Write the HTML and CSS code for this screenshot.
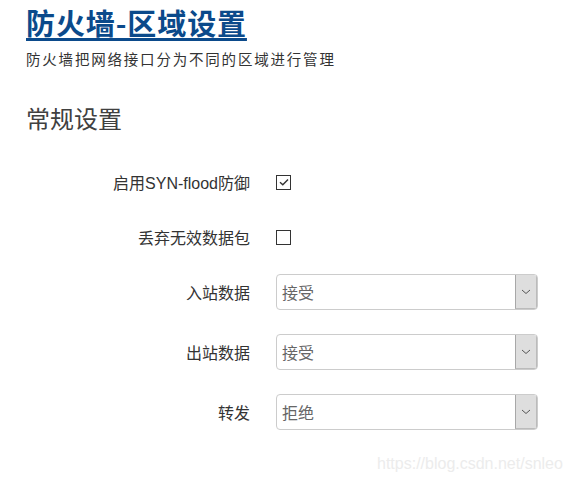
FILE: index.html
```html
<!DOCTYPE html>
<html lang="zh-CN">
<head>
<meta charset="utf-8">
<link rel="stylesheet" href="styles.css">
</head>
<body>
<div class="page">
  <h1 class="title"><a href="#">防火墙-区域设置</a></h1>
  <p class="desc">防火墙把网络接口分为不同的区域进行管理</p>
  <h2 class="section">常规设置</h2>
  <div class="form">
    <div class="row row-check">
      <div class="label">启用SYN-flood防御</div>
      <div class="field"><span class="checkbox"><svg viewBox="0 0 16 16" width="16" height="16"><path d="M4 8.2 L6.8 10.8 L12 5.4" fill="none" stroke="#333" stroke-width="1.4"/></svg></span></div>
    </div>
    <div class="row row-check">
      <div class="label">丢弃无效数据包</div>
      <div class="field"><span class="checkbox"></span></div>
    </div>
    <div class="row row-select">
      <div class="label">入站数据</div>
      <div class="field"><div class="select"><span class="value">接受</span><span class="arrow"><svg viewBox="0 0 10 6" width="10" height="6"><path d="M1 1 L5 4.5 L9 1" fill="none" stroke="#555" stroke-width="1"/></svg></span></div></div>
    </div>
    <div class="row row-select">
      <div class="label">出站数据</div>
      <div class="field"><div class="select"><span class="value">接受</span><span class="arrow"><svg viewBox="0 0 10 6" width="10" height="6"><path d="M1 1 L5 4.5 L9 1" fill="none" stroke="#555" stroke-width="1"/></svg></span></div></div>
    </div>
    <div class="row row-select">
      <div class="label">转发</div>
      <div class="field"><div class="select"><span class="value">拒绝</span><span class="arrow"><svg viewBox="0 0 10 6" width="10" height="6"><path d="M1 1 L5 4.5 L9 1" fill="none" stroke="#555" stroke-width="1"/></svg></span></div></div>
    </div>
  </div>
  <div class="watermark">https://blog.csdn.net/snleo</div>
</div>
</body>
</html>
```
FILE: styles.css
```css
html, body {
  margin: 0;
  padding: 0;
  background: #fff;
}
body {
  font-family: "Noto Sans CJK SC", "Liberation Sans", sans-serif;
  color: #333;
  width: 570px;
  height: 480px;
  overflow: hidden;
}
.page {
  padding-left: 26px;
  position: relative;
  height: 480px;
}
.title {
  margin: 0;
  padding-top: 4px;
  font-size: 29px;
  line-height: 36px;
  font-weight: bold;
  letter-spacing: 0.9px;
}
.title a {
  color: #0b4a8b;
  text-decoration: underline;
  text-decoration-thickness: 3px;
  text-underline-offset: 3px;
}
.desc {
  margin: 9px 0 0;
  font-size: 14.5px;
  line-height: 20px;
  color: #333;
  letter-spacing: 1.8px;
}
.section {
  margin: 33px 0 0;
  font-size: 24px;
  line-height: 32px;
  font-weight: normal;
  color: #404040;
}
.form {
  margin-top: 30px;
  display: flex;
  flex-direction: column;
}
.row {
  display: grid;
  grid-template-columns: 224px 262px;
  column-gap: 26px;
  align-items: center;
}
.row-check {
  height: 36px;
  margin-bottom: 19px;
}
.row-select {
  height: 36px;
  margin-bottom: 24px;
}
.label {
  text-align: right;
  font-family: "Liberation Sans", "Noto Sans CJK SC", sans-serif;
  font-size: 16px;
  color: #333;
}
.field {
  display: flex;
  align-items: center;
}
.checkbox {
  width: 13px;
  height: 13px;
  border: 1.5px solid #333;
  display: flex;
  align-items: center;
  justify-content: center;
  background: #fff;
}
.checkbox svg {
  flex: none;
}
.select {
  width: 262px;
  height: 36px;
  box-sizing: border-box;
  border: 1px solid #ccc;
  border-radius: 4px;
  display: flex;
  align-items: stretch;
  overflow: hidden;
}
.value {
  flex: 1;
  display: flex;
  align-items: center;
  padding-left: 5px;
  font-size: 16px;
  color: #666;
}
.arrow {
  width: 20px;
  background: #dedede;
  border-left: 1px solid #a8a8a8;
  border-right: 1px solid #bbb;
  border-bottom: 1px solid #bbb;
  display: flex;
  align-items: center;
  justify-content: center;
}
.watermark {
  position: absolute;
  left: 377px;
  top: 455px;
  font-family: "Liberation Sans", sans-serif;
  font-size: 16px;
  color: #ececec;
}
```
